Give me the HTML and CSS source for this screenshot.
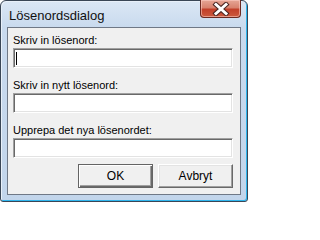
FILE: index.html
```html
<!DOCTYPE html>
<html lang="sv">
<head>
<meta charset="utf-8">
<title>Lösenordsdialog</title>
<link rel="stylesheet" href="styles.css">
</head>
<body>
<div class="window">
  <div class="titlebar">
    <span class="title">Lösenordsdialog</span>
    <div class="close">
      <svg width="20" height="14" viewBox="0 0 20 14">
        <path d="M5 2.5 L15 11.5 M15 2.5 L5 11.5" stroke="#4a2622" stroke-width="5" stroke-linecap="square" fill="none"/>
        <path d="M5 2.5 L15 11.5 M15 2.5 L5 11.5" stroke="#ffffff" stroke-width="3" stroke-linecap="square" fill="none"/>
      </svg>
    </div>
  </div>
  <div class="client">
    <div class="group">
      <label class="label">Skriv in lösenord:</label>
      <div class="field"><span class="caret"></span></div>
    </div>
    <div class="group">
      <label class="label">Skriv in nytt lösenord:</label>
      <div class="field"></div>
    </div>
    <div class="group">
      <label class="label">Upprepa det nya lösenordet:</label>
      <div class="field"></div>
    </div>
    <div class="buttons">
      <div class="btn default"><span class="btn-inner">OK</span></div>
      <div class="btn"><span class="btn-inner">Avbryt</span></div>
    </div>
  </div>
</div>
</body>
</html>
```

FILE: styles.css
```css
html, body {
  margin: 0;
  padding: 0;
  background: #ffffff;
}
.window {
  box-sizing: border-box;
  width: 248px;
  height: 202px;
  border: 1px solid #3a4656;
  border-radius: 6px 6px 3px 3px;
  background: linear-gradient(#dbe7f5 0px, #c9daee 26px, #c2d5eb 100%);
  box-shadow: inset -1px -1px 0 #2fb6ee, inset 1px 1px 0 #e8f0f9;
  display: flex;
  flex-direction: column;
  font-family: "Liberation Sans", Arial, sans-serif;
}
.titlebar {
  height: 26px;
  display: flex;
  align-items: flex-start;
  justify-content: space-between;
}
.title {
  font-size: 13px;
  line-height: 15px;
  color: #101010;
  margin: 7px 0 0 8px;
}
.close {
  box-sizing: border-box;
  width: 41px;
  height: 18px;
  margin: -1px 6px 0 0;
  border: 1px solid #6b2a22;
  border-top: none;
  border-radius: 0 0 4px 4px;
  background: linear-gradient(#e6a696 0%, #d8826e 45%, #c2402a 55%, #cc5a3e 100%);
  box-shadow: inset 0 0 0 1px rgba(255, 210, 200, 0.55);
  display: flex;
  align-items: center;
  justify-content: center;
}
.close svg {
  display: block;
}
.client {
  box-sizing: border-box;
  width: 234px;
  height: 168px;
  margin: 0 0 0 6px;
  border: 1px solid #6f7886;
  background: #f0f0f0;
  padding: 6px 7px 6px 5px;
  display: flex;
  flex-direction: column;
  gap: 11px;
}
.group {
  display: flex;
  flex-direction: column;
  gap: 1px;
}
.label {
  font-size: 11px;
  line-height: 13px;
  color: #000;
  height: 13px;
  white-space: nowrap;
}
.field {
  box-sizing: border-box;
  height: 20px;
  width: 220px;
  background: #fff;
  border-top: 1px solid #a0a0a0;
  border-left: 1px solid #a0a0a0;
  border-right: 1px solid #ffffff;
  border-bottom: 1px solid #ffffff;
  box-shadow: inset 1px 1px 0 #696969, inset -1px -1px 0 #e3e3e3;
  position: relative;
}
.caret {
  position: absolute;
  left: 2px;
  top: 3px;
  width: 1px;
  height: 13px;
  background: #000;
}
.buttons {
  margin-top: -5px;
  display: flex;
  justify-content: flex-end;
  gap: 5px;
  width: 220px;
}
.btn {
  box-sizing: border-box;
  width: 75px;
  height: 24px;
  background: #f0f0f0;
  border-top: 1px solid #ffffff;
  border-left: 1px solid #ffffff;
  border-right: 1px solid #696969;
  border-bottom: 1px solid #696969;
  box-shadow: inset -1px -1px 0 #a0a0a0, inset 1px 1px 0 #e3e3e3;
  display: flex;
  align-items: center;
  justify-content: center;
  font-size: 12px;
  color: #000;
}
.btn.default {
  border: 1px solid #646464;
  box-shadow: inset 1px 1px 0 #ffffff, inset -1px -1px 0 #696969, inset -2px -2px 0 #a0a0a0;
}
.btn-inner {
  line-height: 14px;
}
```
